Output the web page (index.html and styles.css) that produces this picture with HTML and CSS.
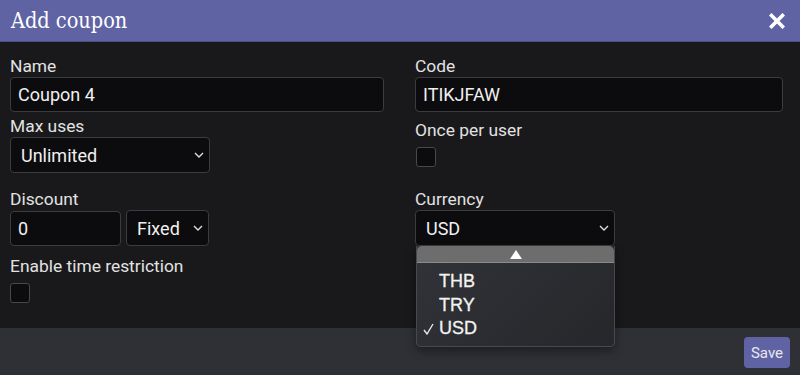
FILE: index.html
```html
<!DOCTYPE html>
<html lang="en">
<head>
    <meta charset="UTF-8">
    <meta name="viewport" content="width=device-width, initial-scale=1.0">
    <title>Add coupon</title>
    <link rel="stylesheet" href="styles.css">
</head>
<body>
    <div class="modal">
        <div class="modal-header">
            <h1>Add coupon</h1>
            <button class="close-btn" aria-label="Close">
                <svg width="16" height="16" viewBox="0 0 16 16">
                    <path d="M2.5 2.5 L13.5 13.5 M13.5 2.5 L2.5 13.5" stroke="#fff" stroke-width="3.6" stroke-linecap="square"/>
                </svg>
            </button>
        </div>

        <div class="modal-body">
            <div class="field row1">
                <label>Name</label>
                <input type="text" class="text-input" value="Coupon 4">
            </div>
            <div class="field row1">
                <label>Code</label>
                <input type="text" class="text-input code" value="ITIKJFAW">
            </div>

            <div class="field row2">
                <label>Max uses</label>
                <div class="select-wrap max-uses">
                    <select class="select"><option>Unlimited</option></select>
                    <svg class="chevron" width="10" height="6" viewBox="0 0 10 6"><path d="M1 1 L5 5 L9 1" fill="none" stroke="#ddd" stroke-width="1.4"/></svg>
                </div>
            </div>
            <div class="field row2 once">
                <label>Once per user</label>
                <span class="checkbox"></span>
            </div>

            <div class="field row3">
                <label>Discount</label>
                <div class="discount">
                    <input type="text" class="text-input amount" value="0">
                    <div class="select-wrap type">
                        <select class="select"><option>Fixed</option></select>
                        <svg class="chevron" width="10" height="6" viewBox="0 0 10 6"><path d="M1 1 L5 5 L9 1" fill="none" stroke="#ddd" stroke-width="1.4"/></svg>
                    </div>
                </div>
            </div>
            <div class="field row3">
                <label>Currency</label>
                <div class="select-wrap currency">
                    <select class="select"><option>USD</option></select>
                    <svg class="chevron" width="10" height="6" viewBox="0 0 10 6"><path d="M1 1 L5 5 L9 1" fill="none" stroke="#ddd" stroke-width="1.4"/></svg>
                    <div class="dropdown">
                        <div class="scroll-up">
                            <svg width="12" height="9" viewBox="0 0 12 9"><path d="M6 0 L12 9 L0 9 Z" fill="#fff"/></svg>
                        </div>
                        <ul class="options">
                            <li>THB</li>
                            <li>TRY</li>
                            <li class="selected">
                                <svg class="tick" width="11" height="12" viewBox="0 0 11 12"><path d="M1 7 L4 11 L10 1" fill="none" stroke="#e6e6e6" stroke-width="1.4"/></svg>
                                USD
                            </li>
                        </ul>
                    </div>
                </div>
            </div>

            <div class="field row4">
                <label>Enable time restriction</label>
                <span class="checkbox"></span>
            </div>
        </div>

        <div class="modal-footer">
            <button class="save-btn">Save</button>
        </div>
    </div>
</body>
</html>
```

FILE: styles.css
```css
* {
    box-sizing: border-box;
}

body {
    margin: 0;
    background-color: #19191b;
    font-family: Roboto, "Liberation Sans", sans-serif;
    color: #e6e6e6;
}

.modal {
    width: 800px;
    height: 375px;
    display: flex;
    flex-direction: column;
}

.modal-header {
    height: 42px;
    background-color: #6063a3;
    display: flex;
    align-items: center;
    justify-content: space-between;
    padding: 0 15px 0 11px;
    border-bottom: 1px solid #4a4d86;
}

.modal-header h1 {
    margin: 0;
    font-family: "DejaVu Serif", "Liberation Serif", serif;
    font-stretch: condensed;
    font-weight: normal;
    font-size: 21.5px;
    color: #fff;
}

.close-btn {
    background: none;
    border: none;
    padding: 0;
    display: flex;
    cursor: pointer;
}

.modal-body {
    flex: 1;
    display: grid;
    grid-template-columns: 374px 368px;
    column-gap: 31px;
    align-content: start;
    padding: 14px 0 0 10px;
}

.field label {
    display: block;
    font-size: 17.4px;
    line-height: 20px;
    color: #e2e2e2;
}

.row2 { margin-top: 4px; }
.row3 { margin-top: 16px; }
.row4 { margin-top: 10px; }

.once label { margin-top: 4px; }

.text-input {
    display: block;
    width: 100%;
    height: 35px;
    margin-top: 1px;
    padding: 0 7px;
    background-color: #0c0c0e;
    border: 1px solid #3c3c40;
    border-radius: 4px;
    color: #f0f0f0;
    font-family: Roboto, "Liberation Sans", sans-serif;
    font-size: 18px;
    outline: none;
}

.select-wrap {
    position: relative;
    margin-top: 1px;
}

.select {
    display: block;
    width: 100%;
    height: 36px;
    padding: 0 10px;
    -webkit-appearance: none;
    appearance: none;
    background-color: #0c0c0e;
    border: 1px solid #3c3c40;
    border-radius: 4px;
    color: #f0f0f0;
    font-family: Roboto, "Liberation Sans", sans-serif;
    font-size: 18px;
    outline: none;
}

.chevron {
    position: absolute;
    right: 6px;
    top: 15px;
    pointer-events: none;
}

.max-uses {
    width: 200px;
}

.discount {
    display: flex;
    gap: 5px;
    margin-top: 1px;
}

.discount .text-input {
    margin-top: 1px;
}

.amount {
    width: 111px !important;
}

.type {
    width: 83px;
    margin-top: 0;
}

.currency {
    width: 200px;
}

.checkbox {
    display: block;
    width: 20px;
    height: 20px;
    margin-top: 7px;
    background-color: #0c0c0e;
    border: 1px solid #48484c;
    border-radius: 3px;
}

.once .checkbox {
    margin-top: 7px;
    margin-left: 1px;
}

.dropdown {
    position: absolute;
    top: 36px;
    left: 1px;
    width: 199px;
    height: 101px;
    background: linear-gradient(135deg, #323338, #26272b);
    border: 1px solid #48494d;
    border-top: none;
    border-radius: 0 0 5px 5px;
    box-shadow: 0 4px 10px rgba(0, 0, 0, 0.4);
    z-index: 2;
}

.scroll-up {
    height: 17px;
    background-color: #6d6d6d;
    border-radius: 5px 5px 0 0;
    border-bottom: 1px solid #8a8a8a;
    display: flex;
    align-items: center;
    justify-content: center;
}

.options {
    list-style: none;
    margin: 0;
    padding: 7px 0 0 0;
}

.options li {
    position: relative;
    height: 23.5px;
    line-height: 23.5px;
    padding-left: 22px;
    font-family: "Liberation Sans", Arial, sans-serif;
    font-size: 18px;
    color: #f2f2f2;
    -webkit-text-stroke: 0.3px #f2f2f2;
}

.tick {
    position: absolute;
    left: 6px;
    top: 6px;
}

.modal-footer {
    height: 47px;
    background-color: #2e3036;
    display: flex;
    justify-content: flex-end;
    align-items: flex-start;
    padding: 9px 10px 0 0;
}

.save-btn {
    width: 46px;
    height: 31px;
    background-color: #6063a3;
    color: #e8e8f0;
    border: none;
    border-radius: 4px;
    font-family: Roboto, "Liberation Sans", sans-serif;
    font-size: 15px;
    padding: 0;
    cursor: pointer;
}
```
